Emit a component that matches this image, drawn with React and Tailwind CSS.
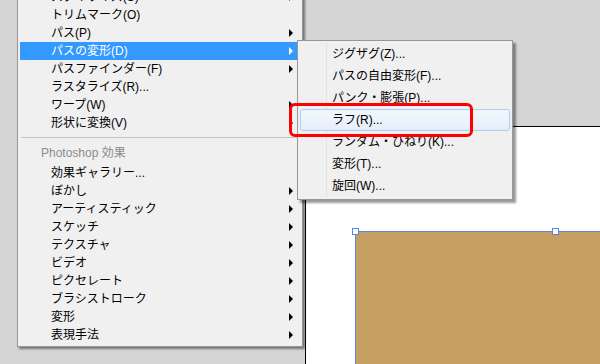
import React from 'react';

const mainTop = [
    { label: 'スタイライズ(S)', arrow: true },
    { label: 'トリムマーク(O)' },
    { label: 'パス(P)', arrow: true },
    { label: 'パスの変形(D)', arrow: true, active: true },
    { label: 'パスファインダー(F)', arrow: true },
    { label: 'ラスタライズ(R)...' },
    { label: 'ワープ(W)', arrow: true },
    { label: '形状に変換(V)', arrow: true },
];

const mainBottom = [
    { label: '効果ギャラリー...' },
    { label: 'ぼかし', arrow: true },
    { label: 'アーティスティック', arrow: true },
    { label: 'スケッチ', arrow: true },
    { label: 'テクスチャ', arrow: true },
    { label: 'ビデオ', arrow: true },
    { label: 'ピクセレート', arrow: true },
    { label: 'ブラシストローク', arrow: true },
    { label: '変形', arrow: true },
    { label: '表現手法', arrow: true },
];

const subItems = [
    { label: 'ジグザグ(Z)...' },
    { label: 'パスの自由変形(F)...' },
    { label: 'パンク・膨張(P)...' },
    { label: 'ラフ(R)...', hover: true },
    { label: 'ランダム・ひねり(K)...' },
    { label: '変形(T)...' },
    { label: '旋回(W)...' },
];

const MenuRow = ({ item }) => (
    <div
        className={`h-[18px] flex items-center justify-between pl-[31px] pr-[7px] leading-[18px] ${item.active ? 'bg-[#3399ff] text-white' : 'text-black'}`}
    >
        <span className="whitespace-nowrap">{item.label}</span>
        {item.arrow && (
            <span
                className={`w-0 h-0 border-t-[4px] border-b-[4px] border-l-[4px] border-t-transparent border-b-transparent ${item.active ? 'border-l-white' : 'border-l-black'}`}
            />
        )}
    </div>
);

const App = () => {
    return (
        <div className="relative w-[600px] h-[364px] overflow-hidden bg-[#d4d4d4] text-[12px] font-['Liberation_Sans','Noto_Sans_CJK_JP',sans-serif]">
            {/* artboard */}
            <div className="absolute left-[305px] top-[126px] w-[320px] h-[260px] bg-white border-l border-t border-black">
                <div className="absolute left-[49px] top-[104px] w-[420px] h-[200px] bg-[#c69f63] border border-[#5a84e6]" />
                <div className="absolute left-[46px] top-[101px] w-[7px] h-[7px] bg-white border border-[#5a84e6]" />
                <div className="absolute left-[246px] top-[101px] w-[7px] h-[7px] bg-white border border-[#5a84e6]" />
            </div>

            {/* effect menu */}
            <div className="absolute left-[17px] top-[-15px] w-[286px] bg-[#f0f0f0] border border-[#979797] p-[2px] shadow-[2px_2px_2px_rgba(0,0,0,0.45)]">
                {mainTop.map((item) => (
                    <MenuRow key={item.label} item={item} />
                ))}
                <div className="h-[11px] flex items-center px-[1px]">
                    <div className="w-full h-px bg-[#c2c2c2]" />
                </div>
                <div className="h-[20px] flex items-center pl-[21px] text-[#8c8c8c]">Photoshop 効果</div>
                <div className="h-[1px]" />
                {mainBottom.map((item) => (
                    <MenuRow key={item.label} item={item} />
                ))}
            </div>

            {/* submenu */}
            <div className="absolute left-[297px] top-[40px] w-[216px] bg-[#f0f0f0] border border-[#979797] p-[2px] shadow-[3px_3px_2px_rgba(0,0,0,0.4)]">
                <div className="absolute left-[28px] top-[2px] bottom-[2px] w-px bg-[#e2e3e3]" />
                <div className="relative flex flex-col">
                    {subItems.map((item) => (
                        <div key={item.label} className="h-[22px] flex items-center">
                            <div
                                className={`w-full h-[22px] flex items-center pl-[31px] rounded-[3px] border ${item.hover ? 'border-[#aecff3] bg-[linear-gradient(#f2f7fd,#e4eefb)]' : 'border-transparent'}`}
                            >
                                <span className="whitespace-nowrap text-black">{item.label}</span>
                            </div>
                        </div>
                    ))}
                </div>
            </div>

            {/* callout */}
            <div className="absolute left-[289px] top-[103px] w-[184px] h-[34px] border-[3px] border-[#ff0000] rounded-[6px]" />
        </div>
    );
};

export default App;
